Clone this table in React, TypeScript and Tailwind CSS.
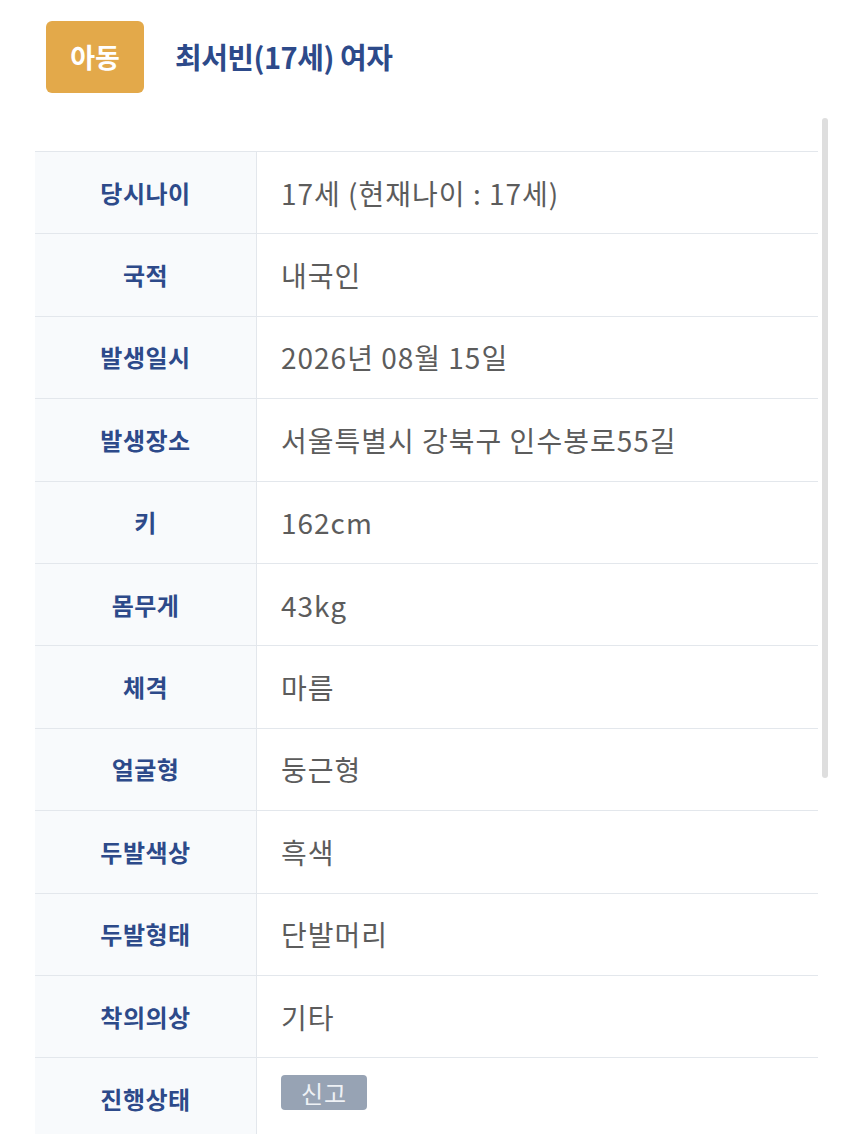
const rows: [string, string][] = [
  ["당시나이", "17세 (현재나이 : 17세)"],
  ["국적", "내국인"],
  ["발생일시", "2026년 08월 15일"],
  ["발생장소", "서울특별시 강북구 인수봉로55길"],
  ["키", "162cm"],
  ["몸무게", "43kg"],
  ["체격", "마름"],
  ["얼굴형", "둥근형"],
  ["두발색상", "흑색"],
  ["두발형태", "단발머리"],
  ["착의의상", "기타"],
];

function Row({ label, children }: { label: string; children: React.ReactNode }) {
  return (
    <div className="flex h-[82.4px] border-t border-[#e3e7ec]">
      <div className="w-[222px] shrink-0 bg-[#f8fafc] border-r border-[#e3e7ec] flex items-center justify-center text-[24px] font-bold text-[#2d4a8a] tracking-[0.5px]">
        {label}
      </div>
      <div className="flex-1 flex items-center pl-[24px] text-[28px] text-[#5c5c5c] tracking-[1px]">
        {children}
      </div>
    </div>
  );
}

export default function App() {
  return (
    <div
      className="relative w-[850px] h-[1134px] overflow-hidden bg-white"
      style={{ fontFamily: '"Noto Sans CJK KR", "Noto Sans", sans-serif' }}
    >
      <div className="flex items-center pt-[21px] pl-[46px]">
        <div className="w-[98px] h-[72px] rounded-[6px] bg-[#e3a94a] flex items-center justify-center text-white text-[27px] font-bold">
          아동
        </div>
        <h1 className="ml-[31px] text-[29px] font-bold text-[#2d4a8a] tracking-[-0.5px]">
          최서빈(17세) 여자
        </h1>
      </div>

      <div className="mt-[58px] ml-[35px] w-[783px]">
        {rows.map(([l, v]) => (
          <Row key={l} label={l}>
            {v}
          </Row>
        ))}
        <Row label="진행상태">
          <span className="self-start mt-[17px] w-[86px] h-[35px] rounded-[4px] bg-[#97a3b4] text-[#eef1f5] text-[24px] tracking-[1px] flex items-center justify-center">
            신고
          </span>
        </Row>
      </div>

      <div className="absolute left-[822px] top-[118px] w-[6px] h-[660px] rounded-full bg-[#dedede]" />
    </div>
  );
}
